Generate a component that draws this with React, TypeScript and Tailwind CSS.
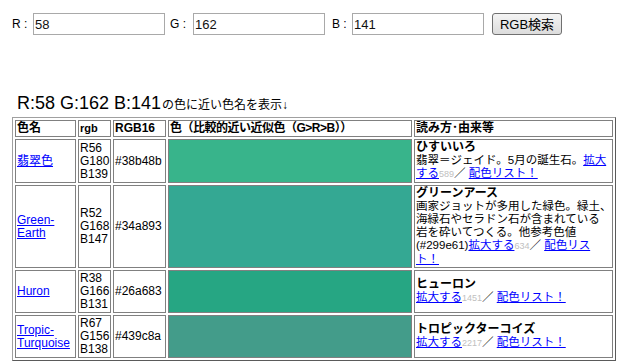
import React from 'react';

interface ColorRow {
  name: string;
  rgb: [string, string, string];
  hex: string;
  swatch: string;
  reading: React.ReactNode;
}

const Count = ({ n }: { n: string }) => (
  <span className="text-[9px] text-[#c0c0c0]">{n}</span>
);

const Link = ({ children }: { children: React.ReactNode }) => (
  <a href="#" className="text-[#0000ff] underline">
    {children}
  </a>
);

const rows: ColorRow[] = [
  {
    name: '翡翠色',
    rgb: ['R56', 'G180', 'B139'],
    hex: '#38b48b',
    swatch: 'bg-[#38b48b]',
    reading: (
      <>
        <b className="text-[12px]">ひすいいろ</b>
        <br />
        翡翠＝ジェイド。5月の誕生石。<Link>拡大<br />する</Link>
        <Count n="589" />／ <Link>配色リスト！</Link>
      </>
    ),
  },
  {
    name: 'Green-Earth',
    rgb: ['R52', 'G168', 'B147'],
    hex: '#34a893',
    swatch: 'bg-[#34a893]',
    reading: (
      <>
        <b className="text-[12px]">グリーンアース</b>
        <br />
        画家ジョットが多用した緑色。緑土、
        <br />
        海緑石やセラドン石が含まれている
        <br />
        岩を砕いてつくる。他参考色値
        <br />
        (#299e61)<Link>拡大する</Link>
        <Count n="634" />／ <Link>配色リス<br />ト！</Link>
      </>
    ),
  },
  {
    name: 'Huron',
    rgb: ['R38', 'G166', 'B131'],
    hex: '#26a683',
    swatch: 'bg-[#26a683]',
    reading: (
      <>
        <b className="text-[12px]">ヒューロン</b>
        <br />
        <Link>拡大する</Link>
        <Count n="1451" />／ <Link>配色リスト！</Link>
      </>
    ),
  },
  {
    name: 'Tropic-Turquoise',
    rgb: ['R67', 'G156', 'B138'],
    hex: '#439c8a',
    swatch: 'bg-[#439c8a]',
    reading: (
      <>
        <b className="text-[12px]">トロピックターコイズ</b>
        <br />
        <Link>拡大する</Link>
        <Count n="2217" />／ <Link>配色リスト！</Link>
      </>
    ),
  },
];

const inputCls =
  "h-[22px] w-[132px] border border-[#a9a9a9] bg-white px-[1px] text-[13px] text-[#111] outline-none";

export default function App() {
  return (
    <div className="min-h-[362px] w-[625px] bg-white font-['Liberation_Sans','Noto_Sans_CJK_JP',sans-serif] text-black">
      {/* RGB search form */}
      <div className="flex items-center pl-[12px] pt-[13px] text-[12px]">
        <span className="w-[21px]">R :</span>
        <input className={inputCls} defaultValue="58" />
        <span className="ml-[5px] w-[23px]">G :</span>
        <input className={inputCls} defaultValue="162" />
        <span className="ml-[7px] w-[20px]">B :</span>
        <input className={inputCls} defaultValue="141" />
        <button className="ml-[8px] h-[22px] w-[70px] rounded-[3px] border border-[#707070] bg-gradient-to-b from-[#f4f4f4] to-[#dcdcdc] text-[13px] leading-none">
          RGB検索
        </button>
      </div>

      {/* Heading */}
      <div className="mt-[59px] pl-[17px] leading-[18px]">
        <span className="text-[18px]">R:58 G:162 B:141</span>
        <span className="ml-[1px] text-[12px]">の色に近い色名を表示↓</span>
      </div>

      {/* Result table */}
      <table className="mt-[3px] ml-[12px] w-[604px] table-fixed border-separate border-spacing-[2px] border border-t-[#a0a0a0] border-l-[#a0a0a0] border-r-[#5a5a5a] border-b-[#5a5a5a] text-[12px]">
        <thead>
          <tr className="leading-[13px]">
            <th className="w-[61px] border border-[#808080] p-[1px] text-left font-bold">色名</th>
            <th className="w-[33px] border border-[#808080] p-[1px] text-left text-[11px] font-bold">rgb</th>
            <th className="w-[53px] border border-[#808080] p-[1px] text-left font-bold">RGB16</th>
            <th className="w-[244px] whitespace-nowrap border border-[#808080] p-[1px] text-left font-bold tracking-[-0.5px]">色（比較的近い近似色（G&gt;R&gt;B））</th>
            <th className="w-[199px] border border-[#808080] p-[1px] text-left font-bold">読み方･由来等</th>
          </tr>
        </thead>
        <tbody>
          {rows.map((r) => (
            <tr key={r.hex} className="leading-[13px]">
              <td className="border border-[#808080] p-[1px] align-middle">
                <Link>{r.name}</Link>
              </td>
              <td className="border border-[#808080] p-[1px] align-middle">
                {r.rgb[0]}
                <br />
                {r.rgb[1]}
                <br />
                {r.rgb[2]}
              </td>
              <td className="border border-[#808080] p-[1px] align-middle">{r.hex}</td>
              <td className={`border border-[#808080] p-[1px] ${r.swatch}`}></td>
              <td className="whitespace-nowrap border border-[#808080] p-[1px] align-middle text-[11.5px]">
                {r.reading}
              </td>
            </tr>
          ))}
        </tbody>
      </table>
    </div>
  );
}
